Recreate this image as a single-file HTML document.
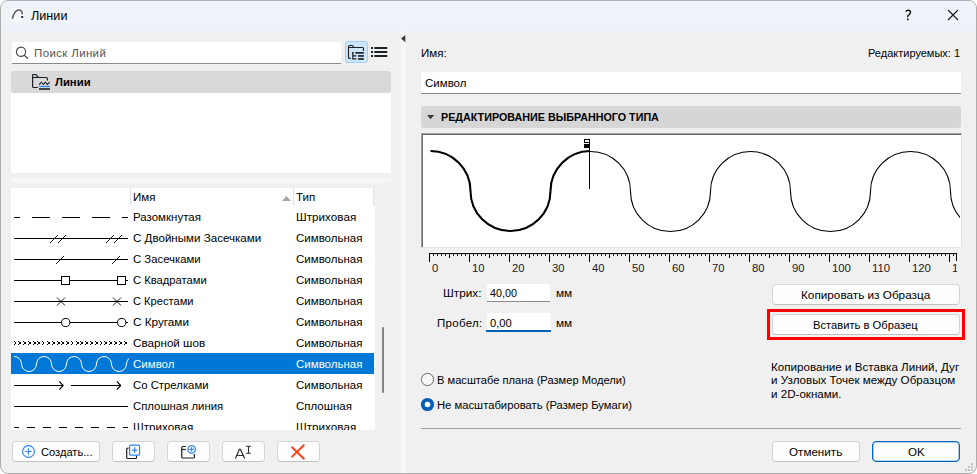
<!DOCTYPE html>
<html><head><meta charset="utf-8">
<style>
*{margin:0;padding:0;box-sizing:border-box}
html,body{width:977px;height:474px;overflow:hidden;background:#fff}
body{position:relative;font-family:"Liberation Sans",sans-serif;font-size:11.5px;color:#000}
.a{position:absolute}
.t{position:absolute;line-height:1;white-space:nowrap}
svg{position:absolute;overflow:visible}
</style></head><body>
<div class="a" style="left:0px;top:0px;width:977px;height:474px;border:1px solid #adadad;border-radius:8px;background:#f0f0f0;overflow:hidden"></div>
<div class="a" style="left:1px;top:1px;width:975px;height:30px;background:#eef2f9;border-radius:7px 7px 0 0"></div>
<svg style="left:9px;top:7px;" width="16" height="16" viewBox="0 0 16 16"><rect x="1" y="1" width="14" height="14" rx="2" fill="#f8f9fb"/>
<path d="M3.3 11.8 C4.5 7 7 2.9 9.8 2.9 C12 2.9 13.3 4.5 13.3 7.3" fill="none" stroke="#5b5b66" stroke-width="1.5"/>
<rect x="12.2" y="9" width="2" height="2" fill="#2e2e38"/></svg>
<div class="t" style="left:31px;top:10px;font-size:12.65px;">Линии</div>
<svg style="left:900px;top:6px;" width="16" height="18" viewBox="0 0 16 18"><path d="M5.8 5.6Q6.5 4.2 8.1 4.2Q10.5 4.2 10.5 6.3Q10.5 7.8 8.9 8.9Q7.7 9.6 7.7 10.6V11.3" fill="none" stroke="#111" stroke-width="1.4"/><rect x="7" y="12.6" width="1.7" height="1.6" fill="#111"/></svg>
<svg style="left:947px;top:9px;" width="12" height="12" viewBox="0 0 12 12"><path d="M1 1L11 11M11 1L1 11" stroke="#1a1a1a" stroke-width="1.1"/></svg>
<div class="a" style="left:12px;top:42px;width:329px;height:22px;background:#fff;border-bottom:1px solid #8a8a8a;border-radius:2px 2px 0 0"></div>
<svg style="left:15px;top:46px;" width="15" height="14" viewBox="0 0 15 14"><circle cx="6" cy="5.8" r="4.6" fill="none" stroke="#4a4a4a" stroke-width="1.2"/><path d="M9.3 9.1L13 12.8" stroke="#4a4a4a" stroke-width="1.3"/></svg>
<div class="t" style="left:34px;top:48px;font-size:11.5px;color:#555;letter-spacing:0.36px">Поиск Линий</div>
<div class="a" style="left:345px;top:41px;width:23px;height:22px;background:#cde6fb;border:1px solid #9fd0fb;border-radius:3px"></div>
<svg style="left:345px;top:42px;" width="22" height="20" viewBox="0 0 22 20"><path d="M5.7 16.4H4.5Q3.5 16.4 3.5 15.4V4.5Q3.5 3.5 4.5 3.5H7.5L9 5.5H17.5Q18.5 5.5 18.5 6.5V8.9" fill="none" stroke="#1c2228" stroke-width="1.1"/>
<path d="M3.5 5.5H9" fill="none" stroke="#1c2228" stroke-width="1"/>
<path d="M7.8 10.6V16.9H11.4M7.8 13.9H11.4" fill="none" stroke="#1c2228" stroke-width="1.2"/>
<rect x="7.1" y="10.1" width="1.5" height="1.5" fill="#1c2228"/><rect x="10.3" y="10" width="8.5" height="1.7" fill="#1c2228"/>
<rect x="13.1" y="13.1" width="5.7" height="1.7" fill="#1c2228"/>
<rect x="13.1" y="16.1" width="5.7" height="1.7" fill="#1c2228"/></svg>
<svg style="left:371px;top:47px;" width="17" height="11" viewBox="0 0 17 11"><rect x="0" y="0" width="2" height="2" fill="#1c2228"/><rect x="3.3" y="0" width="13" height="2" fill="#1c2228"/>
<rect x="0" y="4" width="2" height="2" fill="#1c2228"/><rect x="3.3" y="4" width="13" height="2" fill="#1c2228"/>
<rect x="0" y="8" width="2" height="2" fill="#1c2228"/><rect x="3.3" y="8" width="13" height="2" fill="#1c2228"/></svg>
<div class="a" style="left:11px;top:71px;width:380px;height:102px;background:#fff"></div>
<div class="a" style="left:11px;top:71px;width:380px;height:22px;background:#d9d9d9;border-radius:2px"></div>
<svg style="left:30px;top:72px;" width="22" height="20" viewBox="0 0 22 20"><path d="M7.9 15.5H3.7Q2.6 15.5 2.6 14.4V3.6Q2.6 2.5 3.7 2.5H5.8L8.5 5.5H16.3Q17.4 5.5 17.4 6.6V8.6" fill="none" stroke="#1c2228" stroke-width="1.2"/>
<path d="M2.6 5.5H8.5" fill="none" stroke="#1c2228" stroke-width="1.1"/>
<path d="M9.2 12.5L11.4 10.2L13.4 12.5L15.4 10.2L17.4 12.5L19.6 10.2" fill="none" stroke="#1c2228" stroke-width="1.1"/>
<rect x="9" y="13.8" width="11" height="1.3" fill="#3b8cf7"/>
<rect x="9" y="16.2" width="11" height="1.6" fill="#1c2228"/></svg>
<div class="t" style="left:55px;top:77px;font-size:11.3px;font-weight:bold;">Линии</div>
<div class="a" style="left:11px;top:178px;width:380px;height:5px;background:#f6f6f6"></div>
<div class="a" style="left:11px;top:206px;width:364px;height:224px;background:#fff"></div>
<div class="a" style="left:11px;top:188px;width:363px;height:18px;background:#fff"></div>
<div class="a" style="left:130px;top:188px;width:1px;height:18px;background:#e5e5e5"></div>
<div class="a" style="left:293px;top:188px;width:1px;height:18px;background:#e5e5e5"></div>
<div class="a" style="left:373px;top:188px;width:1px;height:18px;background:#e5e5e5"></div>
<div class="t" style="left:133px;top:192px;font-size:11.5px;">Имя</div>
<svg style="left:282px;top:196px;" width="9" height="5" viewBox="0 0 9 5"><path d="M0 5L4.5 0L9 5Z" fill="#a5a5a5"/></svg>
<div class="t" style="left:296px;top:192px;font-size:11.5px;">Тип</div>
<div class="a" style="left:11px;top:353px;width:363px;height:21px;background:#0078d7"></div>
<div class="a" style="left:11px;top:206px;width:364px;height:224px;overflow:hidden">
<div class="a" style="left:-11px;top:-206px;width:400px;height:474px">
<div class="t" style="left:133px;top:212px;font-size:11.5px;">Разомкнутая</div>
<div class="t" style="left:296px;top:211px;font-size:11.7px;">Штриховая</div>
<div class="t" style="left:133px;top:233px;font-size:11.59px;">С Двойными Засечками</div>
<div class="t" style="left:296px;top:233px;font-size:11.5px;">Символьная</div>
<div class="t" style="left:133px;top:254px;font-size:11.33px;">С Засечками</div>
<div class="t" style="left:296px;top:254px;font-size:11.5px;">Символьная</div>
<div class="t" style="left:133px;top:275px;font-size:11.19px;">С Квадратами</div>
<div class="t" style="left:296px;top:275px;font-size:11.5px;">Символьная</div>
<div class="t" style="left:133px;top:296px;font-size:11.12px;">С Крестами</div>
<div class="t" style="left:296px;top:296px;font-size:11.5px;">Символьная</div>
<div class="t" style="left:133px;top:316px;font-size:11.72px;">С Кругами</div>
<div class="t" style="left:296px;top:317px;font-size:11.5px;">Символьная</div>
<div class="t" style="left:133px;top:337px;font-size:11.66px;">Сварной шов</div>
<div class="t" style="left:296px;top:338px;font-size:11.5px;">Символьная</div>
<div class="t" style="left:133px;top:359px;font-size:11.5px;color:#fff;">Символ</div>
<div class="t" style="left:296px;top:359px;font-size:11.5px;color:#fff;">Символьная</div>
<div class="t" style="left:133px;top:380px;font-size:11.35px;">Со Стрелками</div>
<div class="t" style="left:296px;top:380px;font-size:11.5px;">Символьная</div>
<div class="t" style="left:133px;top:401px;font-size:11.37px;">Сплошная линия</div>
<div class="t" style="left:296px;top:401px;font-size:11.5px;">Сплошная</div>
<div class="t" style="left:133px;top:421px;font-size:11.7px;">Штриховая</div>
<div class="t" style="left:296px;top:421px;font-size:11.7px;">Штриховая</div>
<svg style="left:0;top:0" width="977" height="474" viewBox="0 0 977 474"><path d="M14 217.5H20M32 217.5H50M62 217.5H80M92 217.5H110M122 217.5H128" stroke="#000" stroke-width="1.2"/><path d="M14 238.5H128" stroke="#000" stroke-width="1.1"/><path d="M50 243L58 235M58 243L66 235M106 243L114 235M114 243L122 235" stroke="#000" stroke-width="0.9"/><path d="M14 259.5H128" stroke="#000" stroke-width="1.1"/><path d="M56 264L64 256M112 264L120 256" stroke="#000" stroke-width="0.9"/><path d="M14 280.5H61.5M69.5 280.5H117.5M125.5 280.5H128" stroke="#000" stroke-width="1.1"/><rect x="61.5" y="276.5" width="8" height="8" fill="none" stroke="#000" stroke-width="1"/><rect x="117.5" y="276.5" width="8" height="8" fill="none" stroke="#000" stroke-width="1"/><path d="M14 301.5H128" stroke="#000" stroke-width="1.1"/><path d="M57 297.5L65 305.5M65 297.5L57 305.5M113 297.5L121 305.5M121 297.5L113 305.5" stroke="#000" stroke-width="0.9"/><path d="M14 322.5H61.5M69.8 322.5H117.5M125.8 322.5H128" stroke="#000" stroke-width="1.1"/><circle cx="65.7" cy="322.5" r="4.1" fill="none" stroke="#000" stroke-width="1"/><circle cx="121.7" cy="322.5" r="4.1" fill="none" stroke="#000" stroke-width="1"/><g fill="#000"><rect x="14" y="341" width="1" height="1"/><rect x="14" y="344" width="1" height="1"/><rect x="15" y="342" width="1" height="2"/><rect x="18" y="341" width="1" height="1"/><rect x="18" y="344" width="1" height="1"/><rect x="19" y="342" width="2" height="2"/><rect x="23" y="341" width="1" height="1"/><rect x="23" y="344" width="1" height="1"/><rect x="24" y="342" width="2" height="2"/><rect x="28" y="341" width="1" height="1"/><rect x="28" y="344" width="1" height="1"/><rect x="29" y="342" width="2" height="2"/><rect x="33" y="341" width="1" height="1"/><rect x="33" y="344" width="1" height="1"/><rect x="34" y="342" width="2" height="2"/><rect x="37" y="341" width="1" height="1"/><rect x="37" y="344" width="1" height="1"/><rect x="38" y="342" width="2" height="2"/><rect x="42" y="341" width="1" height="1"/><rect x="42" y="344" width="1" height="1"/><rect x="43" y="342" width="1" height="2"/><rect x="47" y="341" width="1" height="1"/><rect x="47" y="344" width="1" height="1"/><rect x="48" y="342" width="2" height="2"/><rect x="52" y="341" width="1" height="1"/><rect x="52" y="344" width="1" height="1"/><rect x="53" y="342" width="2" height="2"/><rect x="57" y="341" width="1" height="1"/><rect x="57" y="344" width="1" height="1"/><rect x="58" y="342" width="2" height="2"/><rect x="61" y="341" width="1" height="1"/><rect x="61" y="344" width="1" height="1"/><rect x="62" y="342" width="2" height="2"/><rect x="66" y="341" width="1" height="1"/><rect x="66" y="344" width="1" height="1"/><rect x="67" y="342" width="2" height="2"/><rect x="71" y="341" width="1" height="1"/><rect x="71" y="344" width="1" height="1"/><rect x="72" y="342" width="1" height="2"/><rect x="76" y="341" width="1" height="1"/><rect x="76" y="344" width="1" height="1"/><rect x="77" y="342" width="2" height="2"/><rect x="80" y="341" width="1" height="1"/><rect x="80" y="344" width="1" height="1"/><rect x="81" y="342" width="2" height="2"/><rect x="85" y="341" width="1" height="1"/><rect x="85" y="344" width="1" height="1"/><rect x="86" y="342" width="2" height="2"/><rect x="90" y="341" width="1" height="1"/><rect x="90" y="344" width="1" height="1"/><rect x="91" y="342" width="2" height="2"/><rect x="95" y="341" width="1" height="1"/><rect x="95" y="344" width="1" height="1"/><rect x="96" y="342" width="2" height="2"/><rect x="100" y="341" width="1" height="1"/><rect x="100" y="344" width="1" height="1"/><rect x="101" y="342" width="1" height="2"/><rect x="104" y="341" width="1" height="1"/><rect x="104" y="344" width="1" height="1"/><rect x="105" y="342" width="2" height="2"/><rect x="109" y="341" width="1" height="1"/><rect x="109" y="344" width="1" height="1"/><rect x="110" y="342" width="2" height="2"/><rect x="114" y="341" width="1" height="1"/><rect x="114" y="344" width="1" height="1"/><rect x="115" y="342" width="2" height="2"/><rect x="119" y="341" width="1" height="1"/><rect x="119" y="344" width="1" height="1"/><rect x="120" y="342" width="2" height="2"/><rect x="124" y="341" width="1" height="1"/><rect x="124" y="344" width="1" height="1"/><rect x="125" y="342" width="2" height="2"/></g><clipPath id="cl1"><rect x="11" y="353" width="118" height="21"/></clipPath><path clip-path="url(#cl1)" d="M14 356.5A7.5 7.5 0 0 1 21.5 364A7.5 7.5 0 0 0 36.5 364A7.5 7.5 0 0 1 51.5 364A7.5 7.5 0 0 0 66.5 364A7.5 7.5 0 0 1 81.5 364A7.5 7.5 0 0 0 96.5 364A7.5 7.5 0 0 1 111.5 364A7.5 7.5 0 0 0 126.5 364A7.5 7.5 0 0 1 141.5 364" fill="none" stroke="#fff" stroke-width="1"/><path d="M14 385.5H63M71 385.5H120.5" fill="none" stroke="#000" stroke-width="1.1"/><path d="M59.3 381.3L63 385.3V385.7L59.3 389.7M116.8 381.3L120.5 385.3V385.7L116.8 389.7" fill="none" stroke="#000" stroke-width="1.1"/><path d="M14 406.5H128" stroke="#000" stroke-width="1.2"/><path d="M14 427.5H19M27 427.5H35M43 427.5H51M59 427.5H67M75 427.5H83M91 427.5H99M107 427.5H115M123 427.5H128" stroke="#000" stroke-width="1.2"/></svg>
</div></div>
<div class="a" style="left:382px;top:327px;width:2px;height:66px;background:#858585;border-radius:1px"></div>
<div class="a" style="left:401px;top:31px;width:5px;height:442px;background:#f7f7f7"></div>
<svg style="left:401px;top:35px;" width="5" height="8" viewBox="0 0 5 8"><path d="M4.4 0L0 3.6L4.4 7.2Z" fill="#3c3c3c"/></svg>
<div class="a" style="left:12px;top:441px;width:88px;height:21px;background:#fdfdfd;border:1px solid #d5d5d5;border-bottom-color:#c2c2c2;border-radius:4px;"></div>
<svg style="left:22px;top:445px;" width="14" height="14" viewBox="0 0 14 14"><circle cx="6.5" cy="6.5" r="5.9" fill="none" stroke="#2f86f4" stroke-width="1.2"/><path d="M6.5 3.3V9.7M3.3 6.5H9.7" stroke="#2f86f4" stroke-width="1.2"/></svg>
<div class="t" style="left:41px;top:447px;font-size:11.12px;">Создать...</div>
<div class="a" style="left:112px;top:441px;width:43px;height:21px;background:#fdfdfd;border:1px solid #d5d5d5;border-bottom-color:#c2c2c2;border-radius:4px;"></div>
<svg style="left:122px;top:442px;" width="22" height="20" viewBox="0 0 22 20"><path d="M6.6 6.2H5.8Q4.7 6.2 4.7 7.3V15.4Q4.7 16.5 5.8 16.5H13.4Q14.5 16.5 14.5 15.4V13.5" fill="none" stroke="#1c2228" stroke-width="1.2"/>
<rect x="7.6" y="3.1" width="10" height="10" rx="1" fill="#fdfdfd" stroke="#2f86f4" stroke-width="1.2"/>
<path d="M12.6 5.3V10.9M9.8 8.1H15.4" stroke="#2f86f4" stroke-width="1.2"/></svg>
<div class="a" style="left:167px;top:441px;width:43px;height:21px;background:#fdfdfd;border:1px solid #d5d5d5;border-bottom-color:#c2c2c2;border-radius:4px;"></div>
<svg style="left:177px;top:442px;" width="22" height="20" viewBox="0 0 22 20"><path d="M8.9 4.5H5.8Q4.75 4.5 4.75 5.6V15Q4.75 16 5.8 16H16.4Q17.4 16 17.4 15V12" fill="none" stroke="#1c2228" stroke-width="1.2"/>
<path d="M4.75 7.5H8.9" fill="none" stroke="#1c2228" stroke-width="1.2"/>
<circle cx="14.6" cy="7.4" r="3.7" fill="#fdfdfd" stroke="#2f86f4" stroke-width="1.3"/>
<path d="M14.6 5.3V9.5M12.5 7.4H16.7" stroke="#2f86f4" stroke-width="1.2"/></svg>
<div class="a" style="left:222px;top:441px;width:43px;height:21px;background:#fdfdfd;border:1px solid #d5d5d5;border-bottom-color:#c2c2c2;border-radius:4px;"></div>
<svg style="left:232px;top:442px;" width="22" height="20" viewBox="0 0 22 20"><path d="M3.4 16.5L7.3 7.4H8.5L12.7 16.5M5 13.5H11.2" fill="none" stroke="#2a2f35" stroke-width="1.2"/>
<path d="M14.1 4.3H18.8M16.5 4.3V11.3M14.1 11.3H18.8" fill="none" stroke="#2a2f35" stroke-width="1.1"/></svg>
<div class="a" style="left:277px;top:441px;width:43px;height:21px;background:#fdfdfd;border:1px solid #d5d5d5;border-bottom-color:#c2c2c2;border-radius:4px;"></div>
<svg style="left:287px;top:442px;" width="22" height="20" viewBox="0 0 22 20"><path d="M5.1 5.3L16.9 16.7M16.7 3.2L5.1 14.6" stroke="#ff3d14" stroke-width="1.9" stroke-linecap="round"/></svg>
<div class="t" style="left:421px;top:48px;font-size:11.5px;">Имя:</div>
<div class="t" style="left:868px;top:48px;font-size:11.0px;">Редактируемых: 1</div>
<div class="a" style="left:421px;top:72px;width:540px;height:22px;background:#fff;border-bottom:1px solid #8a8a8a;border-radius:2px 2px 0 0"></div>
<div class="t" style="left:425px;top:78px;font-size:11.5px;">Символ</div>
<div class="a" style="left:421px;top:106px;width:540px;height:22px;background:#d6d6d6;border-radius:3px"></div>
<svg style="left:427px;top:114.7px;" width="8" height="5" viewBox="0 0 8 5"><path d="M0 0H7.2L3.6 4.2Z" fill="#383838"/></svg>
<div class="t" style="left:441px;top:112px;font-size:10.75px;font-weight:bold;">РЕДАКТИРОВАНИЕ ВЫБРАННОГО ТИПА</div>
<div class="a" style="left:421px;top:133px;width:541px;height:115px;background:#fff;border-top:1px solid #a0a0a0;border-left:1px solid #a0a0a0;border-right:1px solid #e3e3e3;border-bottom:1px solid #e3e3e3"></div>
<div class="a" style="left:422px;top:134px;width:539px;height:113px;border-top:1px solid #696969;border-left:1px solid #696969"></div>
<svg style="left:0;top:0" width="977" height="474" viewBox="0 0 977 474">
<clipPath id="pv"><rect x="423" y="135" width="537" height="111"/></clipPath>
<clipPath id="thick"><rect x="420" y="130" width="169.5" height="120"/></clipPath>
<clipPath id="thin"><rect x="589.5" y="130" width="370.5" height="120"/></clipPath>
<g clip-path="url(#pv)">
<path clip-path="url(#thin)" d="M430.5 151.5A40 40 0 0 1 470.5 191.5A40 40 0 0 0 550.5 191.5A40 40 0 0 1 630.5 191.5A40 40 0 0 0 710.5 191.5A40 40 0 0 1 790.5 191.5A40 40 0 0 0 870.5 191.5A40 40 0 0 1 950.5 191.5A40 40 0 0 0 1030.5 191.5" fill="none" stroke="#000" stroke-width="1.1"/>
<path clip-path="url(#thick)" d="M430.5 151A40 40 0 0 1 470.5 191A40 40 0 0 0 550.5 191A40 40 0 0 1 630.5 191A40 40 0 0 0 710.5 191A40 40 0 0 1 790.5 191A40 40 0 0 0 870.5 191A40 40 0 0 1 950.5 191A40 40 0 0 0 1030.5 191" fill="none" stroke="#000" stroke-width="2.1"/>
</g>
<path d="M589.5 139V189" stroke="#000" stroke-width="1"/>
<rect x="584.5" y="139.5" width="5" height="3" fill="none" stroke="#000" stroke-width="1"/>
<rect x="584" y="144" width="5" height="4" fill="#000"/>
<path d="M429 253.5H957" stroke="#000" stroke-width="1"/>
<path d="M429.5 253V262M433.5 253V256M437.5 253V256M441.5 253V256M445.5 253V256M449.5 253V258M453.5 253V256M457.5 253V256M461.5 253V256M465.5 253V256M469.5 253V262M473.5 253V256M477.5 253V256M481.5 253V256M485.5 253V256M489.5 253V258M493.5 253V256M497.5 253V256M501.5 253V256M505.5 253V256M509.5 253V262M513.5 253V256M517.5 253V256M521.5 253V256M525.5 253V256M529.5 253V258M533.5 253V256M537.5 253V256M541.5 253V256M545.5 253V256M549.5 253V262M553.5 253V256M557.5 253V256M561.5 253V256M565.5 253V256M569.5 253V258M573.5 253V256M577.5 253V256M581.5 253V256M585.5 253V256M589.5 253V262M593.5 253V256M597.5 253V256M601.5 253V256M605.5 253V256M609.5 253V258M613.5 253V256M617.5 253V256M621.5 253V256M625.5 253V256M629.5 253V262M633.5 253V256M637.5 253V256M641.5 253V256M645.5 253V256M649.5 253V258M653.5 253V256M657.5 253V256M661.5 253V256M665.5 253V256M669.5 253V262M673.5 253V256M677.5 253V256M681.5 253V256M685.5 253V256M689.5 253V258M693.5 253V256M697.5 253V256M701.5 253V256M705.5 253V256M709.5 253V262M713.5 253V256M717.5 253V256M721.5 253V256M725.5 253V256M729.5 253V258M733.5 253V256M737.5 253V256M741.5 253V256M745.5 253V256M749.5 253V262M753.5 253V256M757.5 253V256M761.5 253V256M765.5 253V256M769.5 253V258M773.5 253V256M777.5 253V256M781.5 253V256M785.5 253V256M789.5 253V262M793.5 253V256M797.5 253V256M801.5 253V256M805.5 253V256M809.5 253V258M813.5 253V256M817.5 253V256M821.5 253V256M825.5 253V256M829.5 253V262M833.5 253V256M837.5 253V256M841.5 253V256M845.5 253V256M849.5 253V258M853.5 253V256M857.5 253V256M861.5 253V256M865.5 253V256M869.5 253V262M873.5 253V256M877.5 253V256M881.5 253V256M885.5 253V256M889.5 253V258M893.5 253V256M897.5 253V256M901.5 253V256M905.5 253V256M909.5 253V262M913.5 253V256M917.5 253V256M921.5 253V256M925.5 253V256M929.5 253V258M933.5 253V256M937.5 253V256M941.5 253V256M945.5 253V256M949.5 253V262M953.5 253V256M956.5 253V261" stroke="#000" stroke-width="1"/>
</svg>
<div class="a" style="left:420px;top:258px;width:537px;height:20px;overflow:hidden"><div class="a" style="left:-420px;top:-258px;width:977px;height:474px"><div class="t" style="left:432px;top:263px;font-size:11.3px;color:#1a1a1a">0</div>
<div class="t" style="left:472px;top:263px;font-size:11.3px;color:#1a1a1a">10</div>
<div class="t" style="left:512px;top:263px;font-size:11.3px;color:#1a1a1a">20</div>
<div class="t" style="left:552px;top:263px;font-size:11.3px;color:#1a1a1a">30</div>
<div class="t" style="left:592px;top:263px;font-size:11.3px;color:#1a1a1a">40</div>
<div class="t" style="left:632px;top:263px;font-size:11.3px;color:#1a1a1a">50</div>
<div class="t" style="left:672px;top:263px;font-size:11.3px;color:#1a1a1a">60</div>
<div class="t" style="left:712px;top:263px;font-size:11.3px;color:#1a1a1a">70</div>
<div class="t" style="left:752px;top:263px;font-size:11.3px;color:#1a1a1a">80</div>
<div class="t" style="left:792px;top:263px;font-size:11.3px;color:#1a1a1a">90</div>
<div class="t" style="left:832px;top:263px;font-size:11.3px;color:#1a1a1a">100</div>
<div class="t" style="left:872px;top:263px;font-size:11.3px;color:#1a1a1a">110</div>
<div class="t" style="left:912px;top:263px;font-size:11.3px;color:#1a1a1a">120</div>
<div class="t" style="left:952px;top:263px;font-size:11.3px;color:#1a1a1a">130</div>
</div></div>
<div class="t" style="left:443px;top:288px;font-size:11.8px;">Штрих:</div>
<div class="a" style="left:487px;top:284px;width:63px;height:18px;background:#fff;border-bottom:1px solid #8a8a8a;border-radius:2px 2px 0 0"></div>
<div class="t" style="left:490px;top:288px;font-size:10.8px;">40,00</div>
<div class="t" style="left:556px;top:288px;font-size:11.8px;">мм</div>
<div class="t" style="left:437px;top:318px;font-size:11.5px;letter-spacing:0.3px">Пробел:</div>
<div class="a" style="left:487px;top:313px;width:64px;height:19px;background:#fff;border-radius:2px 2px 0 0"></div>
<div class="a" style="left:486px;top:330px;width:65px;height:2px;background:#005fb8"></div>
<div class="t" style="left:490px;top:318px;font-size:11.2px;">0,00</div>
<div class="t" style="left:556px;top:318px;font-size:11.8px;">мм</div>
<div class="a" style="left:772px;top:284px;width:188px;height:21px;background:#fdfdfd;border:1px solid #d5d5d5;border-bottom-color:#c2c2c2;border-radius:4px;"></div>
<div class="t" style="left:801px;top:289px;font-size:11.75px;">Копировать из Образца</div>
<div class="a" style="left:767px;top:309px;width:198px;height:31px;border:3px solid #ff0000"></div>
<div class="a" style="left:772px;top:314px;width:188px;height:21px;background:#fdfdfd;border:1px solid #d5d5d5;border-bottom-color:#c2c2c2;border-radius:4px;"></div>
<div class="t" style="left:813px;top:320px;font-size:11.2px;">Вставить в Образец</div>
<div class="t" style="left:771px;top:361px;font-size:11.61px;">Копирование и Вставка Линий, Дуг</div>
<div class="t" style="left:771px;top:374px;font-size:11.62px;">и Узловых Точек между Образцом</div>
<div class="t" style="left:771px;top:388px;font-size:11.6px;">и 2D-окнами.</div>
<svg style="left:420px;top:372px;" width="16" height="16" viewBox="0 0 16 16"><circle cx="7.5" cy="7.5" r="6.1" fill="#f6f6f6" stroke="#6a6a6a" stroke-width="1"/></svg>
<div class="t" style="left:437px;top:375px;font-size:11.14px;">В масштабе плана (Размер Модели)</div>
<svg style="left:420px;top:397px;" width="16" height="16" viewBox="0 0 16 16"><circle cx="7.5" cy="7.5" r="6.6" fill="#005fb8"/><circle cx="7.5" cy="7.5" r="2.8" fill="#fff"/></svg>
<div class="t" style="left:437px;top:400px;font-size:11.26px;">Не масштабировать (Размер Бумаги)</div>
<div class="a" style="left:421px;top:428px;width:540px;height:1px;background:#a0a0a0"></div>
<div class="a" style="left:772px;top:441px;width:88px;height:21px;background:#fdfdfd;border:1px solid #d5d5d5;border-bottom-color:#c2c2c2;border-radius:4px;"></div>
<div class="t" style="left:789px;top:446px;font-size:11.65px;">Отменить</div>
<div class="a" style="left:872px;top:441px;width:88px;height:21px;background:#fdfdfd;border:1px solid #0067c0;box-shadow:inset 0 0 0 0.6px rgba(0,103,192,0.55);border-radius:4px"></div>
<div class="t" style="left:908px;top:447px;font-size:11.5px;">OK</div>
<svg style="left:963px;top:463px;" width="10" height="10" viewBox="0 0 10 10"><rect x="8" y="0" width="2" height="2" fill="#c4c4c4"/><rect x="8" y="3" width="2" height="2" fill="#c4c4c4"/><rect x="5" y="3" width="2" height="2" fill="#c4c4c4"/><rect x="8" y="6" width="2" height="2" fill="#c4c4c4"/><rect x="5" y="6" width="2" height="2" fill="#c4c4c4"/><rect x="2" y="6" width="2" height="2" fill="#c4c4c4"/></svg>
</body></html>
